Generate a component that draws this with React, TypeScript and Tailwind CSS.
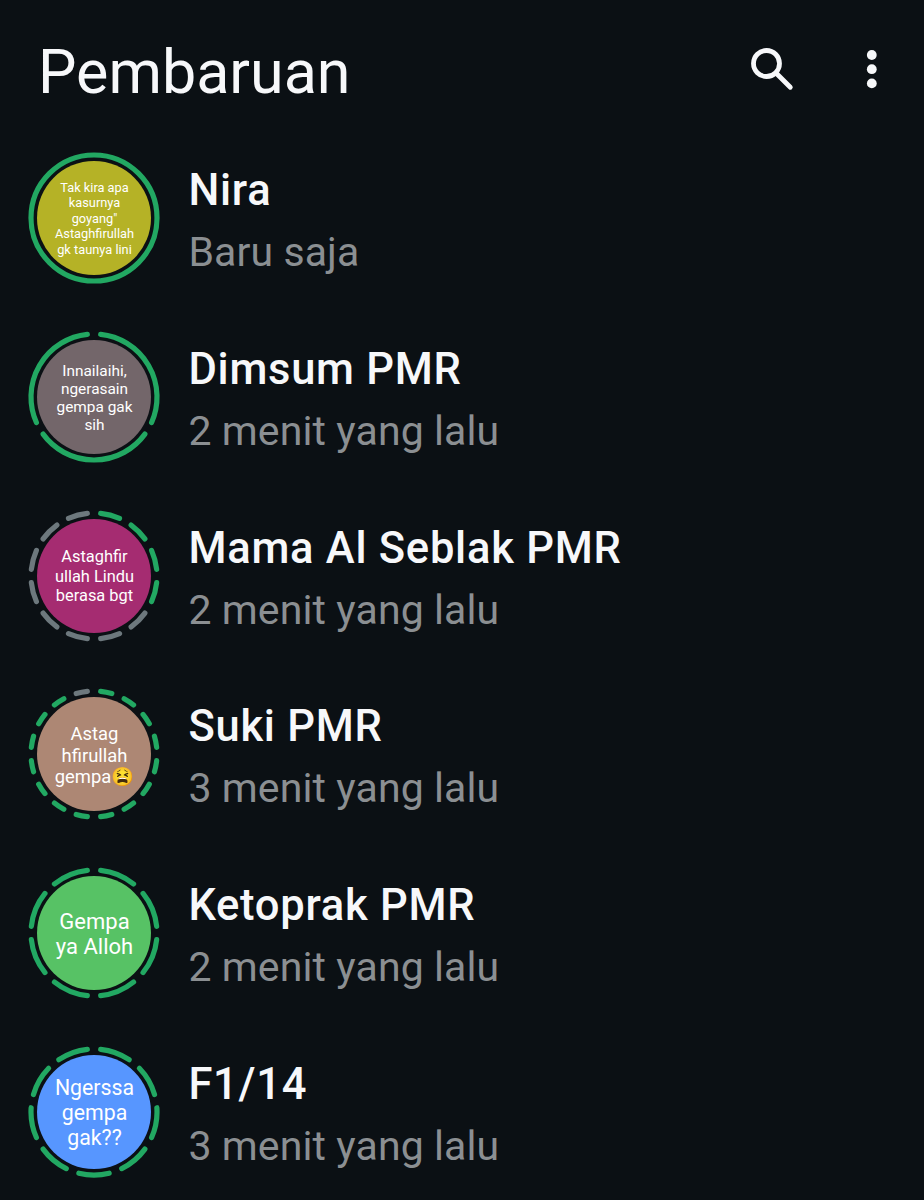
import { clsx } from 'clsx';

type StatusItem = {
  name: string;
  time: string;
  lines: string[];
  circleClass: string;
  textClass: string;
  segments: number;
  seen: number[];
};

const STATUSES: StatusItem[] = [
  {
    name: 'Nira',
    time: 'Baru saja',
    lines: ['Tak kira apa', 'kasurnya', 'goyang"', 'Astaghfirullah', 'gk taunya lini'],
    circleClass: 'bg-[#b5b226]',
    textClass: 'pt-px pl-px text-[12.8px] leading-[15.4px]',
    segments: 1,
    seen: [],
  },
  {
    name: 'Dimsum PMR',
    time: '2 menit yang lalu',
    lines: ['Innailaihi,', 'ngerasain', 'gempa gak', 'sih'],
    circleClass: 'bg-[#73666a]',
    textClass: 'pt-[2px] pl-px text-[15.4px] leading-[18px]',
    segments: 3,
    seen: [],
  },
  {
    name: 'Mama Al Seblak PMR',
    time: '2 menit yang lalu',
    lines: ['Astaghfir', 'ullah Lindu', 'berasa bgt'],
    circleClass: 'bg-[#a52c71]',
    textClass: 'pt-[2px] pl-px text-[16.4px] leading-[19.6px]',
    segments: 12,
    seen: [4, 5, 6, 7, 8, 9, 10, 11],
  },
  {
    name: 'Suki PMR',
    time: '3 menit yang lalu',
    lines: ['Astag', 'hfirullah', 'gempa😫'],
    circleClass: 'bg-[#ad8774]',
    textClass: 'pt-[2px] pl-px text-[18.4px] leading-[21.4px]',
    segments: 16,
    seen: [15],
  },
  {
    name: 'Ketoprak PMR',
    time: '2 menit yang lalu',
    lines: ['Gempa', 'ya Alloh'],
    circleClass: 'bg-[#57c265]',
    textClass: 'pt-[2px] pl-px text-[22px] leading-[25.6px]',
    segments: 8,
    seen: [],
  },
  {
    name: 'F1/14',
    time: '3 menit yang lalu',
    lines: ['Ngerssa', 'gempa', 'gak??'],
    circleClass: 'bg-[#5796ff]',
    textClass: 'pt-[3px] pl-px text-[21.3px] leading-[24.9px]',
    segments: 9,
    seen: [],
  },
];

const RADIUS = 63;
const CENTER = 66;
const GAP = 12.2;

const point = (deg: number) => {
  const rad = ((deg - 90) * Math.PI) / 180;
  return `${(CENTER + RADIUS * Math.cos(rad)).toFixed(2)} ${(CENTER + RADIUS * Math.sin(rad)).toFixed(2)}`;
};

const arc = (index: number, total: number) => {
  const step = 360 / total;
  const start = index * step + GAP / 2;
  const end = (index + 1) * step - GAP / 2;
  return `M${point(start)}A${RADIUS} ${RADIUS} 0 ${end - start > 180 ? 1 : 0} 1 ${point(end)}`;
};

const StatusRing = ({ segments, seen }: { segments: number; seen: number[] }) => (
  <svg viewBox="0 0 132 132" className="col-start-1 row-start-1 size-[132px]" fill="none" strokeWidth="5.2" strokeLinecap="round">
    {segments === 1 ? (
      <circle cx={CENTER} cy={CENTER} r={RADIUS} className="stroke-[#22a862]" />
    ) : (
      Array.from({ length: segments }, (_, i) => (
        <path key={i} d={arc(i, segments)} className={seen.includes(i) ? 'stroke-[#6d787d]' : 'stroke-[#22a862]'} />
      ))
    )}
  </svg>
);

const StatusRow = ({ item }: { item: StatusItem }) => (
  <li className="flex h-[178.8px] items-start">
    <div className="grid size-[132px] shrink-0 place-items-center">
      <StatusRing segments={item.segments} seen={item.seen} />
      <div
        className={clsx(
          'col-start-1 row-start-1 flex size-[114px] flex-col items-center justify-center rounded-full text-center whitespace-nowrap text-white',
          item.circleClass,
          item.textClass,
        )}
      >
        {item.lines.map((line) => (
          <span key={line}>{line}</span>
        ))}
      </div>
    </div>
    <div className="ml-[28.4px] pt-[10px] whitespace-nowrap">
      <div className="text-[43.5px] leading-[58px] font-medium tracking-[0.75px] text-[#f7f8fa]">{item.name}</div>
      <div className="pt-[3px] text-[41px] leading-[58px] tracking-[0.1px] text-[#8b8f92]">{item.time}</div>
    </div>
  </li>
);

export default function App() {
  return (
    <main className="h-[1200px] w-[924px] overflow-hidden bg-[#0b1014] font-[Roboto,'Noto_Color_Emoji',sans-serif]">
      <header className="flex h-[152px] items-start justify-between pl-[38px]">
        <h1 className="pt-[35px] text-[61px] leading-[74px] text-[#f7f8fa]">Pembaruan</h1>
        <div className="flex pt-[45px]">
          <button aria-label="Cari" className="mr-[70px]">
            <svg viewBox="0 0 46 48" className="h-12 w-[46px]" fill="none" stroke="#f7f8fa">
              <circle cx="18.5" cy="18.5" r="13" strokeWidth="4.8" />
              <path d="M28 28L42.3 42.3" strokeWidth="4.8" strokeLinecap="round" />
            </svg>
          </button>
          <button aria-label="Menu" className="mr-[44px]">
            <svg viewBox="0 0 16 48" className="h-12 w-4" fill="#f7f8fa">
              <circle cx="7.8" cy="10" r="4.9" />
              <circle cx="7.8" cy="24.2" r="4.9" />
              <circle cx="7.8" cy="38.4" r="4.9" />
            </svg>
          </button>
        </div>
      </header>
      <ul className="pl-7">
        {STATUSES.map((item) => (
          <StatusRow key={item.name} item={item} />
        ))}
      </ul>
    </main>
  );
}
